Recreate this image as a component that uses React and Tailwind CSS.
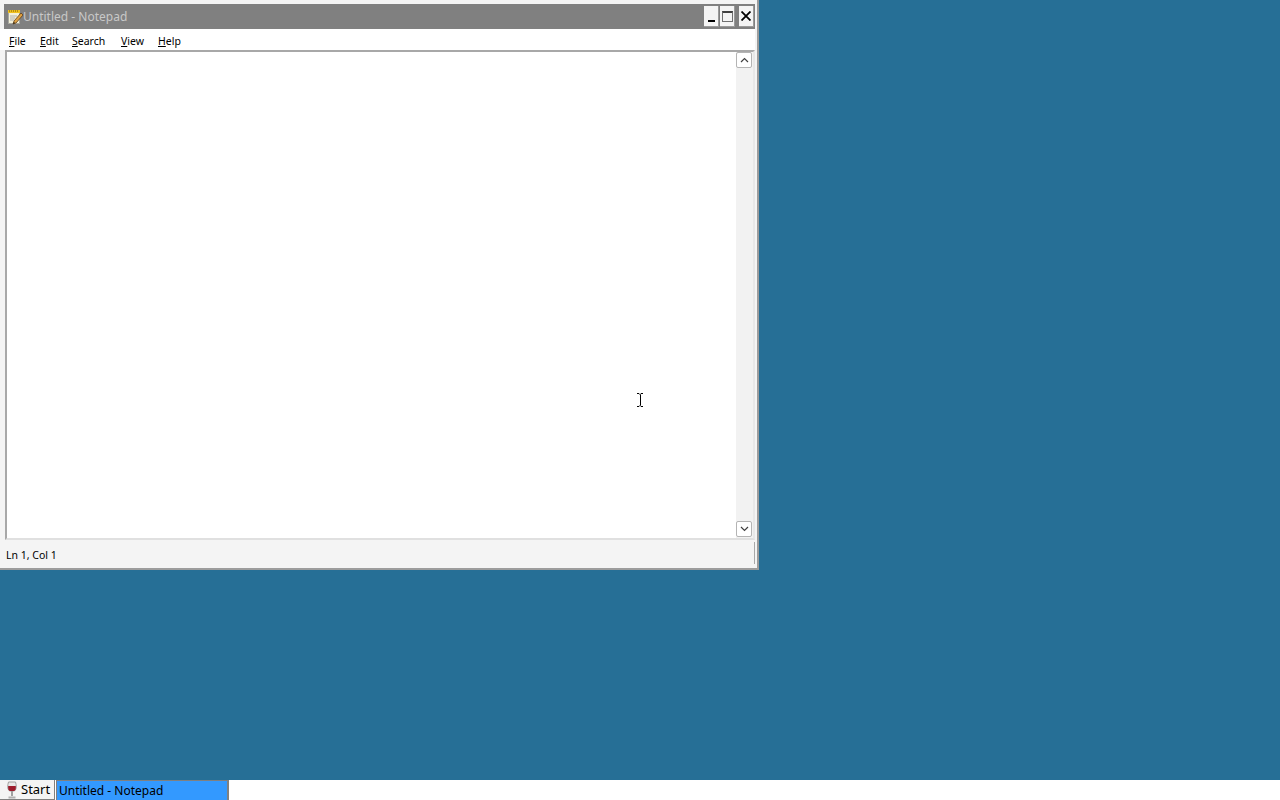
import React from 'react'

const font = { fontFamily: '"Noto Sans", sans-serif' }

const menus = [
  { first: 'F', rest: 'ile', w: 'w-[31px]' },
  { first: 'E', rest: 'dit', w: 'w-[32px]' },
  { first: 'S', rest: 'earch', w: 'w-[49px]' },
  { first: 'V', rest: 'iew', w: 'w-[37px]' },
  { first: 'H', rest: 'elp', w: 'w-[36px]' },
]

function NotepadIcon() {
  return (
    <svg width="16" height="16" viewBox="0 0 16 16" className="shrink-0">
      <rect x="1.500" y="3.500" width="11" height="11" fill="#f4f0d8" stroke="#a8a8a0" />
      <rect x="1" y="1" width="12" height="3" fill="#f0c020" />
      <path d="M2 2h1M4 2h1M6 2h1M8 2h1M10 2h1" stroke="#806000" strokeWidth="1" />
      <path d="M3 7h7M3 9h5M3 11h4" stroke="#b0b0b0" />
      <path d="M14 4L7 12l-1 3 3-1 7-8z" fill="#e0a040" stroke="#604018" strokeWidth="0.8" />
      <path d="M6 15l1-2 1 1z" fill="#202020" />
    </svg>
  )
}

function WineIcon() {
  return (
    <svg width="12" height="18" viewBox="0 0 12 18" className="shrink-0">
      <path d="M2.500 1h7c1 3 1.200 7-.5 8.500-1 .8-5 .8-6 0C1.300 8 1.500 4 2.500 1z" fill="#e8e8e8" stroke="#a0a0a0" />
      <path d="M2.200 5h7.600c.2 2 0 3.500-.8 4.500-1 .8-5 .8-6 0-.8-1-1-2.500-.8-4.500z" fill="#9c1c2c" />
      <path d="M6 10v5" stroke="#a0a0a0" strokeWidth="2" />
      <path d="M2.500 16.500h7" stroke="#b0b0b0" strokeWidth="2" />
    </svg>
  )
}

function CaptionButton({ children, className }) {
  return (
    <div className={`w-[15px] h-[21px] bg-[#f4f4f4] flex items-center justify-center border-r border-b border-[#9a9a9a] ${className || ''}`}>
      {children}
    </div>
  )
}

function ScrollButton({ down }) {
  return (
    <div className="w-[16px] h-[16px] bg-white border border-[#b4b4b4] rounded-[2px] flex items-center justify-center">
      <svg width="9" height="6" viewBox="0 0 9 6">
        <path d={down ? 'M1 1l3.500 3.500L8 1' : 'M1 5l3.500-3.500L8 5'} fill="none" stroke="#404040" strokeWidth="1.200" />
      </svg>
    </div>
  )
}

export default function App() {
  return (
    <div className="h-screen w-full flex flex-col bg-[#266f96] overflow-hidden text-[10.500px] text-black" style={font}>
      <div className="flex-1 min-h-0">
        <div className="w-[759px] h-[570px] bg-[#f4f4f4] border-r-2 border-b-2 border-[#9c9c9c] pt-[4px] pl-[4px] pr-[2px] flex flex-col">
          {/* title bar */}
          <div className="h-[25px] bg-[#808080] flex items-center pl-[3px] pr-[1px] shrink-0">
            <NotepadIcon />
            <span className="text-[#c8c8c8] text-[12px] whitespace-nowrap">Untitled - Notepad</span>
            <div className="ml-auto flex items-center">
              <CaptionButton>
                <div className="w-[7px] h-[2px] bg-black mt-[9px]" />
              </CaptionButton>
              <CaptionButton className="ml-[1px]">
                <div className="w-[11px] h-[11px] border border-[#707070] border-t-2 border-t-[#404040]" />
              </CaptionButton>
              <CaptionButton className="ml-[4px]">
                <svg width="10" height="10" viewBox="0 0 10 10">
                  <path d="M0.500 0.500l9 9M9.500 0.500l-9 9" stroke="#000" strokeWidth="1.800" />
                </svg>
              </CaptionButton>
            </div>
          </div>

          {/* menu */}
          <div className="h-[21px] -ml-[4px] pl-[9px] pt-[4px] flex items-center bg-white shrink-0">
            {menus.map((m) => (
              <div key={m.first} className={m.w}>
                <span className="underline">{m.first}</span>{m.rest}
              </div>
            ))}
          </div>

          {/* edit area */}
          <div className="h-[490px] ml-[1px] border-2 border-[#a8a8a8] border-r-[#e8e8e8] border-b-[#e0e0e0] bg-white flex shrink-0 relative">
            <div className="flex-1 bg-white" />
            <div className="w-[17px] bg-[#f2f2f2] flex flex-col justify-between pb-[1px]">
              <ScrollButton />
              <ScrollButton down />
            </div>
            {/* text cursor */}
            <svg width="9" height="14" viewBox="0 0 9 14" className="absolute left-[629px] top-[341px]">
              <path d="M1 .5h2l1 1 1-1h2M4.500 1.500v11M1 13.500h2l1-1 1 1h2" fill="none" stroke="#000" />
            </svg>
          </div>

          {/* status bar */}
          <div className="flex-1 -ml-[4px] pl-[6px] pt-[4px] flex items-center relative">
            <span>Ln 1, Col 1</span>
            <div className="absolute right-0 top-[2px] bottom-[4px] w-[1px] bg-[#a8a8a8]" />
          </div>
        </div>
      </div>

      {/* taskbar */}
      <div className="h-[20px] bg-white flex shrink-0 text-[12px]">
        <div className="w-[55px] bg-[#f4f4f4] border-r border-b border-[#808080] flex items-center pl-[6px] gap-[3px]">
          <WineIcon />
          <span className="text-[13px]">Start</span>
        </div>
        <div className="w-[173px] ml-[1px] bg-[#3399ff] border-t border-l border-[#808080] border-r-2 border-r-[#808080] flex items-center pl-[2px]">
          <span className="whitespace-nowrap">Untitled - Notepad</span>
        </div>
      </div>
    </div>
  )
}
